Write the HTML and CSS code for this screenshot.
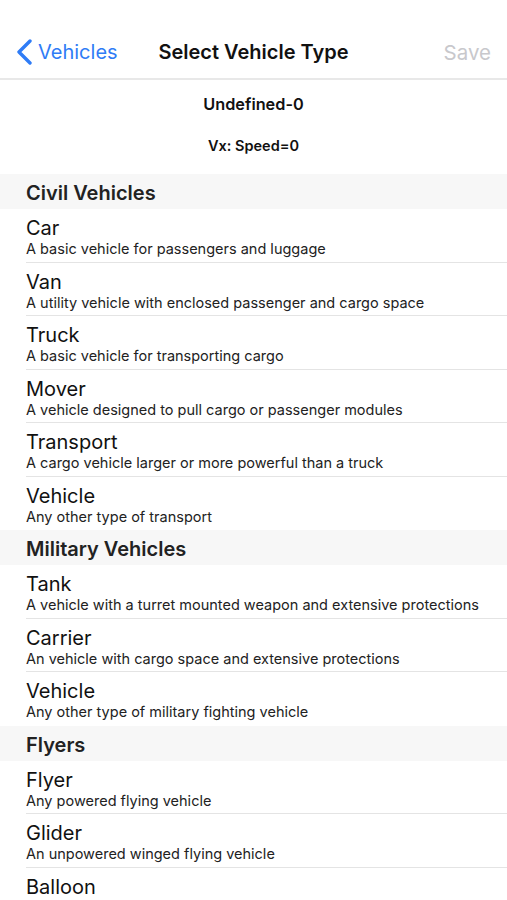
FILE: index.html
```html
<!DOCTYPE html>
<html lang="en">
<head>
    <meta charset="UTF-8">
    <meta name="viewport" content="width=device-width, initial-scale=1.0">
    <title>Select Vehicle Type</title>
    <link rel="stylesheet" href="styles.css">
</head>
<body>
    <div class="nav-bar">
        <a class="nav-back" href="#">
            <svg class="chevron" width="17" height="26" viewBox="0 0 17 26">
                <path d="M14 2 L3 13 L14 24" fill="none" stroke="#2f7cf6" stroke-width="3.4" stroke-linecap="round" stroke-linejoin="round"/>
            </svg>
            <span>Vehicles</span>
        </a>
        <div class="nav-title">Select Vehicle Type</div>
        <div class="nav-save">Save</div>
    </div>

    <div class="vehicle-info">
        <div class="vehicle-name">Undefined-0</div>
        <div class="vehicle-speed">Vx: Speed=0</div>
    </div>

    <div class="section-header">Civil Vehicles</div>
    <ul class="type-list">
        <li><div class="type-title">Car</div><div class="type-desc">A basic vehicle for passengers and luggage</div></li>
        <li><div class="type-title">Van</div><div class="type-desc">A utility vehicle with enclosed passenger and cargo space</div></li>
        <li><div class="type-title">Truck</div><div class="type-desc">A basic vehicle for transporting cargo</div></li>
        <li><div class="type-title">Mover</div><div class="type-desc">A vehicle designed to pull cargo or passenger modules</div></li>
        <li><div class="type-title">Transport</div><div class="type-desc">A cargo vehicle larger or more powerful than a truck</div></li>
        <li><div class="type-title">Vehicle</div><div class="type-desc">Any other type of transport</div></li>
    </ul>

    <div class="section-header">Military Vehicles</div>
    <ul class="type-list">
        <li><div class="type-title">Tank</div><div class="type-desc">A vehicle with a turret mounted weapon and extensive protections</div></li>
        <li><div class="type-title">Carrier</div><div class="type-desc">An vehicle with cargo space and extensive protections</div></li>
        <li><div class="type-title">Vehicle</div><div class="type-desc">Any other type of military fighting vehicle</div></li>
    </ul>

    <div class="section-header">Flyers</div>
    <ul class="type-list">
        <li><div class="type-title">Flyer</div><div class="type-desc">Any powered flying vehicle</div></li>
        <li><div class="type-title">Glider</div><div class="type-desc">An unpowered winged flying vehicle</div></li>
        <li><div class="type-title">Balloon</div></li>
    </ul>
</body>
</html>
```

FILE: styles.css
```css
body {
    font-family: Inter, "Liberation Sans", sans-serif;
    margin: 0;
    padding: 0;
    background-color: #ffffff;
    color: #111111;
    width: 507px;
    height: 900px;
    overflow: hidden;
}
.nav-bar {
    display: flex;
    align-items: center;
    justify-content: space-between;
    height: 52px;
    margin-top: 26px;
    padding: 0 16px 0 16px;
    border-bottom: 2px solid #e8e8e8;
    box-sizing: content-box;
}
.nav-back {
    display: flex;
    align-items: center;
    gap: 5px;
    color: #2f7cf6;
    text-decoration: none;
    font-size: 20px;
    width: 110px;
}
.chevron {
    display: block;
}
.nav-title {
    font-size: 20px;
    font-weight: 600;
    color: #111111;
}
.nav-save {
    font-size: 20.5px;
    color: #c8c8cc;
    width: 110px;
    text-align: right;
}
.vehicle-info {
    text-align: center;
    font-weight: 600;
    height: 94px;
}
.vehicle-name {
    font-size: 16.3px;
    padding-top: 14px;
}
.vehicle-speed {
    font-size: 14.5px;
    padding-top: 23px;
}
.section-header {
    background-color: #f7f7f7;
    height: 35px;
    box-sizing: border-box;
    padding-top: 3px;
    line-height: 32px;
    padding-left: 26px;
    font-size: 20px;
    font-weight: 600;
    color: #222222;
}
.type-list {
    list-style: none;
    margin: 0;
    padding: 0 0 0 26px;
}
.type-list li {
    height: 53.5px;
    box-sizing: border-box;
    padding-top: 7px;
    border-bottom: 1px solid #e4e4e4;
}
.type-list li:last-child {
    border-bottom: none;
}
.type-title {
    font-size: 20px;
    line-height: 24px;
    color: #111111;
}
.type-desc {
    font-size: 14.5px;
    line-height: 18px;
    color: #222222;
}
```
